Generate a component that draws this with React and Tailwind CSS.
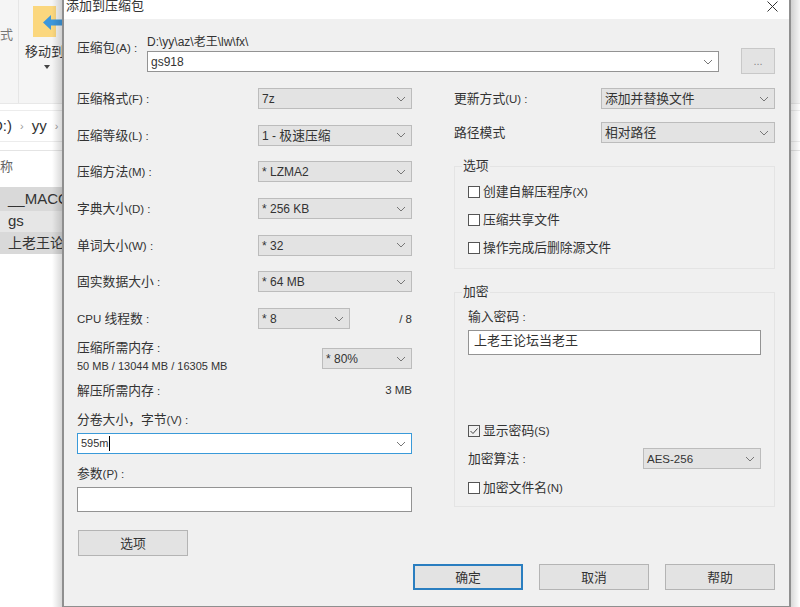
const cjk = "font-['Liberation_Sans','Noto_Sans_CJK_SC',sans-serif]";

// latin part of a mixed label is set smaller than the hanzi around it
function L({ children }) {
  return <span className="text-[11.5px]">{children}</span>;
}

function Chevron() {
  return (
    <svg width="10" height="6" viewBox="0 0 10 6" className="shrink-0" fill="none" stroke="#777" strokeWidth="1">
      <path d="M1 1l4 4 4-4" />
    </svg>
  );
}

function Select({ value, className = '' }) {
  return (
    <div className={`flex h-[21px] items-center justify-between border border-[#bcbcbc] bg-[#e3e3e3] pl-[3px] pr-[5px] text-[#333] ${className}`}>
      <span>{value}</span>
      <Chevron />
    </div>
  );
}

function Combo({ value, className = '', focused = false }) {
  return (
    <div className={`flex h-[21px] items-center justify-between border bg-white pl-[3px] pr-[5px] text-[#333] ${focused ? 'border-[#3a9ad9]' : 'border-[#939393]'} ${className}`}>
      <span className="flex items-center">
        {value}
        {focused && <span className="h-[15px] w-px bg-black" />}
      </span>
      <Chevron />
    </div>
  );
}

function Check({ label, checked = false }) {
  return (
    <div className="flex h-[14px] items-center gap-[3px]">
      <span className={`flex size-[12px] items-center justify-center border border-[#555] ${checked ? '' : 'bg-white'}`}>
        {checked && (
          <svg width="10" height="10" viewBox="0 0 10 10" fill="none" stroke="#444" strokeWidth="1">
            <path d="M1.5 5l2.5 2.5 4.5-5" />
          </svg>
        )}
      </span>
      <span>{label}</span>
    </div>
  );
}

function Button({ children, primary = false, className = '' }) {
  return (
    <div className={`flex h-[26px] w-[110px] items-center justify-center bg-[#e3e3e3] text-[#333] ${primary ? 'border-2 border-[#2a7ec0]' : 'border border-[#b4b4b4]'} ${className}`}>
      {children}
    </div>
  );
}

function Group({ title, className = '', children }) {
  return (
    <div className={`relative border border-[#e4e4e4] ${className}`}>
      <span className="absolute left-[7px] top-[-9px] bg-[#f0f0f0] px-px leading-[16px]">{title}</span>
      {children}
    </div>
  );
}

const formRows = [
  [<>压缩格式<L>(F) :</L></>, <span className="text-[12px]">7z</span>],
  [<>压缩等级<L>(L) :</L></>, <><span className="text-[12px]">1 - </span>极速压缩</>],
  [<>压缩方法<L>(M) :</L></>, <span className="text-[12px]">* LZMA2</span>],
  [<>字典大小<L>(D) :</L></>, <span className="text-[12px]">* 256 KB</span>],
  [<>单词大小<L>(W) :</L></>, <span className="text-[12px]">* 32</span>],
  [<>固实数据大小<L> :</L></>, <span className="text-[12px]">* 64 MB</span>],
];

// explorer window that sits behind the dialog
function Explorer() {
  return (
    <div className="flex h-full w-full flex-col bg-white text-[13px] text-[#333]">
      <div className="flex h-[104px] border-b border-[#e8e8e8] bg-[#f5f5f5]">
        <div className="w-[19px] border-r border-[#e6e6e6] pt-[25px] text-[#777]">式</div>
        <div className="flex flex-col items-start">
          <div className="relative ml-[14px] mt-[6px] h-[31px] w-[23px] bg-[#fbd77e]">
            <svg className="absolute left-[10px] top-[9px]" width="20" height="15" viewBox="0 0 20 15" fill="#3d97dc">
              <path d="M0 7.500l8-7.500v4.500h12v6H8v4.500z" />
            </svg>
          </div>
          <span className="ml-[6px] mt-[5px] whitespace-nowrap">移动到</span>
          <svg className="ml-[25px] mt-[3px]" width="6" height="4" viewBox="0 0 6 4" fill="#444"><path d="M0 0h6L3 4z" /></svg>
        </div>
      </div>
      <div className="mt-[6px] flex h-[32px] items-center gap-[8px] border-y border-[#ececec] text-[15px]">
        <span className="ml-[-8px]">D:)</span>
        <span className="text-[11px] text-[#999]">›</span>
        <span>yy</span>
        <span className="text-[11px] text-[#999]">›</span>
      </div>
      <div className="mt-[8px] flex h-[37px] items-center border-t border-[#e4e4e4] pb-[4px] text-[#666]">称</div>
      <div className="flex h-[24px] w-[62px] items-center overflow-hidden whitespace-nowrap bg-[#d9d9d9] pl-[8px] text-[15px]">__MACOSX</div>
      <div className="flex h-[21px] w-[62px] items-center bg-[#e6e6e6] pl-[8px] text-[15px]">gs</div>
      <div className="flex h-[22px] w-[62px] items-center overflow-hidden whitespace-nowrap bg-[#d9d9d9] pl-[8px] text-[14px]">上老王论坛</div>
    </div>
  );
}

export default function App() {
  return (
    <div className={`relative h-[607px] w-[800px] overflow-hidden text-[12.8px] text-[#333] ${cjk}`}>
      <Explorer />

      <div className="absolute left-[52px] top-0 h-[607px] w-[10px] bg-gradient-to-r from-transparent to-black/15" />
      <div className="absolute left-[791px] top-0 h-[607px] w-[9px] bg-gradient-to-r from-black/15 to-transparent" />

      <div className="absolute left-[62px] top-0 flex h-[607px] w-[729px] flex-col border-x-2 border-b border-x-[#8f8f8f] border-b-[#8f8f8f] bg-[#f0f0f0]">
        <div className="flex h-[19px] shrink-0 items-center justify-between bg-white pl-[2px] pr-[11px] text-[13px]">
          <span className="mt-[-8px]">添加到压缩包</span>
          <svg className="mt-[-7px]" width="11" height="11" viewBox="0 0 11 11" stroke="#333" strokeWidth="1"><path d="M.5.5l10 10M10.5.5l-10 10" /></svg>
        </div>

        <div className="flex pl-[13px] pt-[14px]">
          <span className="w-[70px] pt-[5px]">压缩包<L>(A) :</L></span>
          <div className="flex flex-col">
            <span className="h-[18px] text-[12px]">D:\yy\az\老王\lw\fx\</span>
            <Combo value={<span className="text-[12px]">gs918</span>} className="w-[572px]" />
          </div>
          <div className="ml-[22px] mt-[15px] flex h-[26px] w-[34px] items-center justify-center border border-[#c8c8c8] bg-[#e3e3e3] text-[11px] text-[#888]">...</div>
        </div>

        <div className="flex pl-[13px] pt-[14px]">
          <div className="flex w-[335px] flex-col">
            <div className="grid auto-rows-[36.7px] grid-cols-[181px_154px] items-start">
              {formRows.map(([label, value], i) => (
                <div key={i} className="contents">
                  <span className="leading-[21px]">{label}</span>
                  <Select value={value} />
                </div>
              ))}
            </div>
            <div className="flex h-[35px] items-start">
              <span className="w-[181px] leading-[21px]"><L>CPU </L>线程数<L> :</L></span>
              <Select value={<span className="text-[12px]">* 8</span>} className="w-[92px]" />
              <span className="ml-auto leading-[21px]"><L>/ 8</L></span>
            </div>
            <div className="flex h-[36px] items-start justify-between">
              <div className="mt-[-4px] flex flex-col">
                <span className="leading-[18px]">压缩所需内存<L> :</L></span>
                <span className="whitespace-nowrap text-[11px] leading-[18px]">50 MB / 13044 MB / 16305 MB</span>
              </div>
              <Select value={<span className="text-[12px]">* 80%</span>} className="mt-[5px] w-[90px]" />
            </div>
            <div className="flex h-[23px] items-center justify-between">
              <span>解压所需内存<L> :</L></span>
              <L>3 MB</L>
            </div>
            <span className="mt-[9px] leading-[18px]">{'分卷大小\uFF0C字节'}<L>(V) :</L></span>
            <Combo value={<span className="text-[11px]">595m</span>} focused className="mt-[4px]" />
            <span className="mt-[11px] leading-[18px]">参数<L>(P) :</L></span>
            <div className="mt-[4px] h-[25px] border border-[#939393] bg-white" />
            <Button className="ml-px mt-[18px]">选项</Button>
          </div>

          <div className="ml-[42px] flex w-[321px] flex-col">
            <div className="flex h-[34px] items-start justify-between">
              <span className="leading-[21px]">更新方式<L>(U) :</L></span>
              <Select value="添加并替换文件" className="w-[174px]" />
            </div>
            <div className="flex h-[44px] items-start justify-between">
              <span className="leading-[21px]">路径模式</span>
              <Select value="相对路径" className="w-[174px]" />
            </div>
            <Group title="选项" className="flex h-[103px] flex-col gap-[14px] pl-[13px] pt-[18px]">
              <Check label={<>创建自解压程序<L>(X)</L></>} />
              <Check label="压缩共享文件" />
              <Check label="操作完成后删除源文件" />
            </Group>
            <Group title="加密" className="mt-[23px] flex h-[215px] flex-col px-[13px] pt-[16px]">
              <span className="leading-[16px]">输入密码<L> :</L></span>
              <div className="mt-[5px] flex h-[25px] items-center border border-[#939393] bg-white pb-[3px] pl-[5px] text-[13px]">上老王论坛当老王</div>
              <div className="mt-[69px]"><Check label={<>显示密码<L>(S)</L></>} checked /></div>
              <div className="mt-[10px] flex h-[21px] items-center justify-between">
                <span>加密算法<L> :</L></span>
                <Select value={<L>AES-256</L>} className="w-[118px]" />
              </div>
              <div className="mt-[12px]"><Check label={<>加密文件名<L>(N)</L></>} /></div>
            </Group>
          </div>
        </div>

        <div className="mt-[8px] flex justify-end gap-[16px] pr-[14px]">
          <Button primary>确定</Button>
          <Button>取消</Button>
          <Button>帮助</Button>
        </div>
      </div>
    </div>
  );
}
